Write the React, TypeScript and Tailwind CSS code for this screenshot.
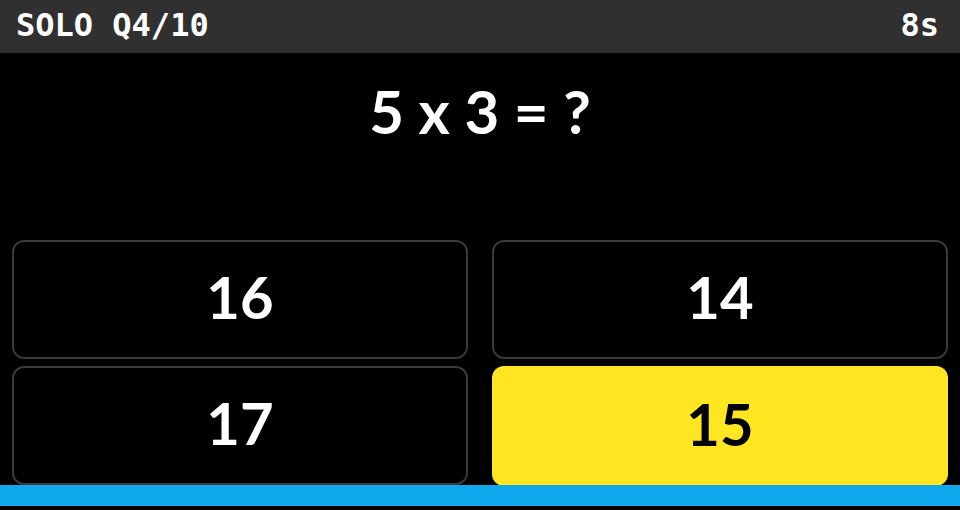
const answers = [
  { label: "16", selected: false },
  { label: "14", selected: false },
  { label: "17", selected: false },
  { label: "15", selected: true },
];

export default function App() {
  return (
    <div className="w-[960px] h-[510px] bg-black flex flex-col overflow-hidden">
      <div
        className="h-[53px] bg-[#303030] flex items-center justify-between pl-[16px] pr-[21px] pb-[4px] text-white font-bold text-[32px] leading-none"
        style={{ fontFamily: '"DejaVu Sans Mono", monospace' }}
      >
        <span>SOLO Q4/10</span>
        <span>8s</span>
      </div>

      <div
        className="h-[187px] flex justify-center pt-[22px] text-white font-bold text-[60px] leading-[72px]"
        style={{ fontFamily: "Lato, sans-serif" }}
      >
        5 x 3 = ?
      </div>

      <div
        className="grid grid-cols-2 gap-x-[24px] gap-y-[7px] px-[12px]"
        style={{ fontFamily: "Lato, sans-serif" }}
      >
        {answers.map((a) => (
          <div
            key={a.label}
            className={
              a.selected
                ? "h-[120px] rounded-[12px] bg-[#ffe620] text-black flex items-center justify-center pb-[6px] text-[58px] font-bold"
                : "h-[119px] rounded-[12px] border-2 border-[#3a3a3a] text-white flex items-center justify-center pb-[6px] text-[58px] font-bold"
            }
          >
            {a.label}
          </div>
        ))}
      </div>

      <div className="h-[21px] bg-[#10a8ec] -mt-px" />
    </div>
  );
}
